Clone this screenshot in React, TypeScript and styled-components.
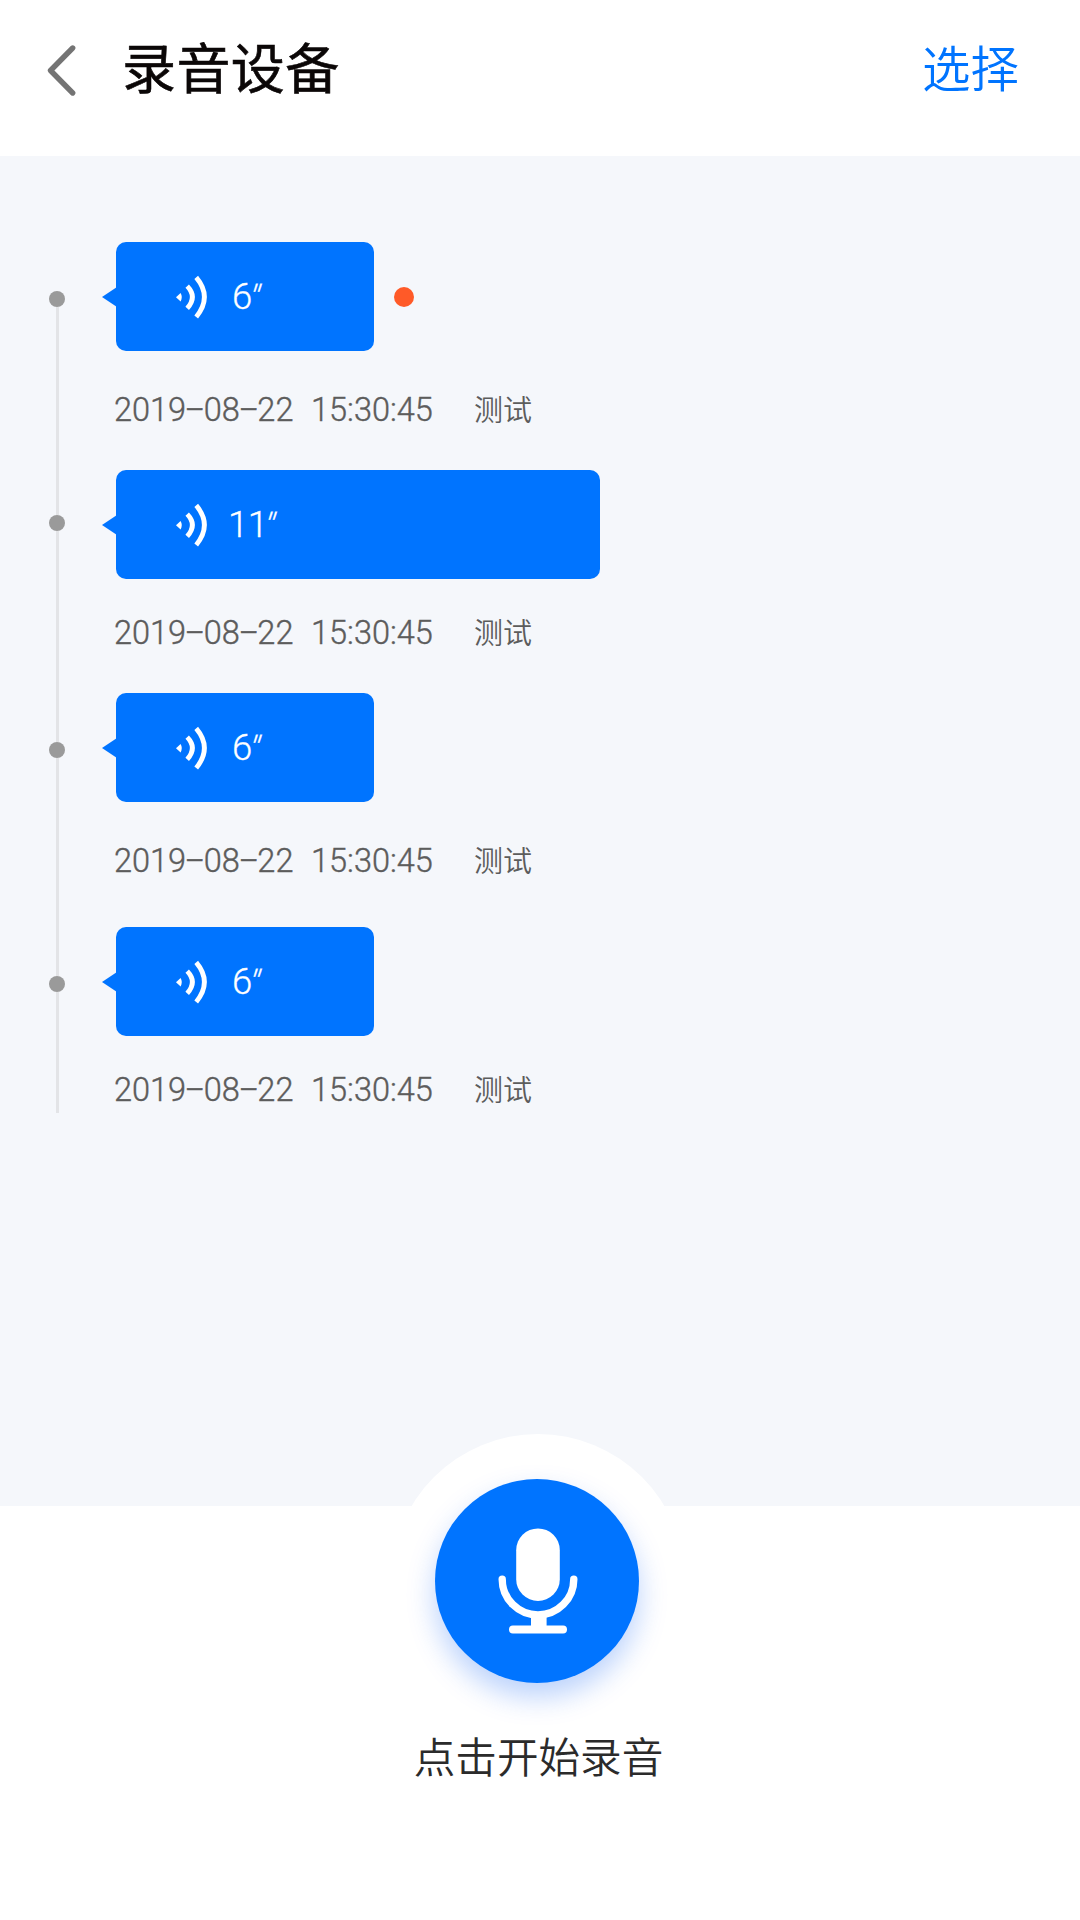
import React from 'react';
import styled, { createGlobalStyle } from 'styled-components';

const BLUE = '#0074ff';

const GlobalStyle = createGlobalStyle`
  * { box-sizing: border-box; }
  body {
    margin: 0;
    background: #fff;
    font-family: Roboto, 'Noto Sans CJK SC', sans-serif;
  }
`;

const Screen = styled.div`
  display: flex;
  flex-direction: column;
  width: 1080px;
  height: 1920px;
  overflow: hidden;
  background: #fff;
`;

const Header = styled.header`
  display: flex;
  align-items: flex-start;
  height: 156px;
  padding: 26px 61px 0 43px;
`;

const BackButton = styled.button`
  display: flex;
  width: 36px;
  height: 56px;
  margin: 17px 43px 0 0;
  padding: 0;
  border: 0;
  background: none;
`;

const Title = styled.h1`
  flex: 1;
  margin: 0;
  font: 400 54px/80px 'Noto Sans CJK SC', sans-serif;
  letter-spacing: 0.4px;
  color: #0b0707;
  -webkit-text-stroke: 0.6px #0b0707;
`;

const SelectButton = styled.button`
  padding: 0;
  border: 0;
  background: none;
  font: 350 48.5px/80px 'Noto Sans CJK SC', sans-serif;
  color: ${BLUE};
`;

const Main = styled.main`
  height: 1350px;
  padding: 86px 0 0 48px;
  background: #f5f7fb;
`;

const Timeline = styled.ol`
  display: flex;
  flex-direction: column;
  margin: 0;
  padding: 0;
  list-style: none;
`;

const Entry = styled.li<{ $height: number }>`
  display: flex;
  height: ${(p) => p.$height}px;
`;

const Rail = styled.div`
  display: flex;
  flex-direction: column;
  align-items: center;
  width: 18px;
  margin-right: 50px;
`;

const Line = styled.span<{ $height?: number; $hidden?: boolean }>`
  flex: ${(p) => (p.$height === undefined ? '1' : `0 0 ${p.$height}px`)};
  width: 3px;
  margin-left: 1px;
  background: ${(p) => (p.$hidden ? 'transparent' : '#e3e4e7')};
`;

const Dot = styled.span`
  width: 16px;
  height: 16px;
  margin-right: 1px;
  border-radius: 50%;
  background: #9a9a9a;
`;

const Record = styled.div`
  display: flex;
  flex-direction: column;
`;

const BubbleRow = styled.div`
  display: flex;
  align-items: center;
  gap: 20px;
`;

const Bubble = styled.button<{ $width: number; $gap: number }>`
  position: relative;
  display: flex;
  align-items: center;
  gap: ${(p) => p.$gap}px;
  width: ${(p) => p.$width}px;
  height: 109px;
  padding: 0 0 0 58px;
  border: 0;
  border-radius: 10px;
  background: ${BLUE};
  color: #fff;

  &::before {
    content: '';
    position: absolute;
    left: -14px;
    top: 45px;
    border: solid transparent;
    border-width: 10px 15px 10px 0;
    border-right-color: ${BLUE};
  }
`;

const Duration = styled.span`
  display: flex;
  align-items: center;
  margin-top: 1px;
  font: 300 36.5px/44px Roboto, sans-serif;
  letter-spacing: -0.6px;
  -webkit-text-stroke: 0.3px #fff;
`;

const Seconds = styled.span`
  margin-left: -3px;
  font-weight: 300;
  transform: translateY(2px) skewX(-16deg);
`;

const Unread = styled.span`
  width: 20px;
  height: 20px;
  border-radius: 50%;
  background: #ff5a28;
`;

const Meta = styled.div<{ $top: number }>`
  display: flex;
  align-items: center;
  height: 40px;
  margin-top: ${(p) => p.$top}px;
  font: 300 32.5px/40px Roboto, sans-serif;
  color: #5c5c5c;
  white-space: pre;
`;

const DateText = styled.span`
  display: flex;
  width: 197px;
  margin: 1px 0 0 -2px;
  -webkit-text-stroke: 0.4px #5c5c5c;
`;

const Dash = styled.span`
  display: inline-block;
  width: 17.6px;
  text-align: center;
  transform: translateY(-1px) scaleX(1.95);
`;

const TimeText = styled.span`
  width: 163px;
  margin-top: 1px;
  -webkit-text-stroke: 0.4px #5c5c5c;
`;

const Tag = styled.span`
  margin-top: -3px;
  font: 350 29px/40px 'Noto Sans CJK SC', sans-serif;
`;

const Footer = styled.footer`
  display: flex;
  flex: 1;
  flex-direction: column;
  align-items: center;
  background: #fff;
`;

const Halo = styled.div`
  display: flex;
  align-items: center;
  justify-content: center;
  width: 294px;
  height: 294px;
  margin: -72px 4px 0 0;
  padding-right: 2px;
  border-radius: 50%;
  background: #fff;
`;

const RecordButton = styled.button`
  display: flex;
  width: 204px;
  height: 204px;
  padding: 0;
  border: 0;
  border-radius: 50%;
  background: ${BLUE};
  box-shadow: 0 14px 28px rgba(0, 90, 245, 0.27);
`;

const Caption = styled.p`
  margin: -3px 3px 0 0;
  font: 350 41.6px/60px 'Noto Sans CJK SC', sans-serif;
  color: #2b2b2b;
`;

const BackIcon = () => (
  <svg width="36" height="56" viewBox="0 0 36 56" fill="none">
    <path d="M29.7 5 7.5 27.5 29.7 50" stroke="#747474" strokeWidth="5.4" strokeLinecap="round" strokeLinejoin="round" />
  </svg>
);

const SoundIcon = () => (
  <svg width="36" height="44" viewBox="0 0 36 44" fill="none" stroke="#fff" strokeWidth="4.8">
    <path d="M2 22.2 6.6 18Q9 22.2 6.6 26.4Z" fill="#fff" stroke="none" />
    <path d="M13.2 11.2Q23.6 22 13.2 33.4" />
    <path d="M22.2 2.4Q38.6 22 22.2 42" />
  </svg>
);

const MicIcon = () => (
  <svg width="204" height="204" viewBox="435 1478 204 204" fill="none">
    <rect x="516.2" y="1527.4" width="43.6" height="72.6" rx="21.8" fill="#fff" />
    <path d="M502.2 1578.2a35.8 35.8 0 0 0 71.6 0" stroke="#fff" strokeWidth="7.4" strokeLinecap="round" />
    <path d="M531 1615h15.6v12H531z" fill="#fff" />
    <rect x="509" y="1624.6" width="58" height="7.8" rx="3.9" fill="#fff" />
  </svg>
);

interface RecordItem {
  duration: number;
  width: number;
  gap: number;
  height: number;
  dotTop: number;
  metaTop: number;
  unread?: boolean;
}

const records: RecordItem[] = [
  { duration: 6, width: 258, gap: 22, height: 228, dotTop: 49, metaTop: 38, unread: true },
  { duration: 11, width: 484, gap: 18, height: 223, dotTop: 45, metaTop: 33 },
  { duration: 6, width: 258, gap: 22, height: 234, dotTop: 49, metaTop: 38 },
  { duration: 6, width: 258, gap: 22, height: 186, dotTop: 49, metaTop: 33 },
];

export default function App() {
  return (
    <Screen>
      <GlobalStyle />
      <Header>
        <BackButton aria-label="返回">
          <BackIcon />
        </BackButton>
        <Title>录音设备</Title>
        <SelectButton>选择</SelectButton>
      </Header>
      <Main>
        <Timeline>
          {records.map((r, i) => (
            <Entry key={i} $height={r.height}>
              <Rail>
                <Line $height={r.dotTop} $hidden={i === 0} />
                <Dot />
                <Line />
              </Rail>
              <Record>
                <BubbleRow>
                  <Bubble $width={r.width} $gap={r.gap}>
                    <SoundIcon />
                    <Duration>
                      {r.duration}
                      <Seconds>″</Seconds>
                    </Duration>
                  </Bubble>
                  {r.unread && <Unread />}
                </BubbleRow>
                <Meta $top={r.metaTop}>
                  <DateText>
                    2019<Dash>-</Dash>08<Dash>-</Dash>22
                  </DateText>
                  <TimeText>15:30:45</TimeText>
                  <Tag>测试</Tag>
                </Meta>
              </Record>
            </Entry>
          ))}
        </Timeline>
      </Main>
      <Footer>
        <Halo>
          <RecordButton aria-label="录音">
            <MicIcon />
          </RecordButton>
        </Halo>
        <Caption>点击开始录音</Caption>
      </Footer>
    </Screen>
  );
}
